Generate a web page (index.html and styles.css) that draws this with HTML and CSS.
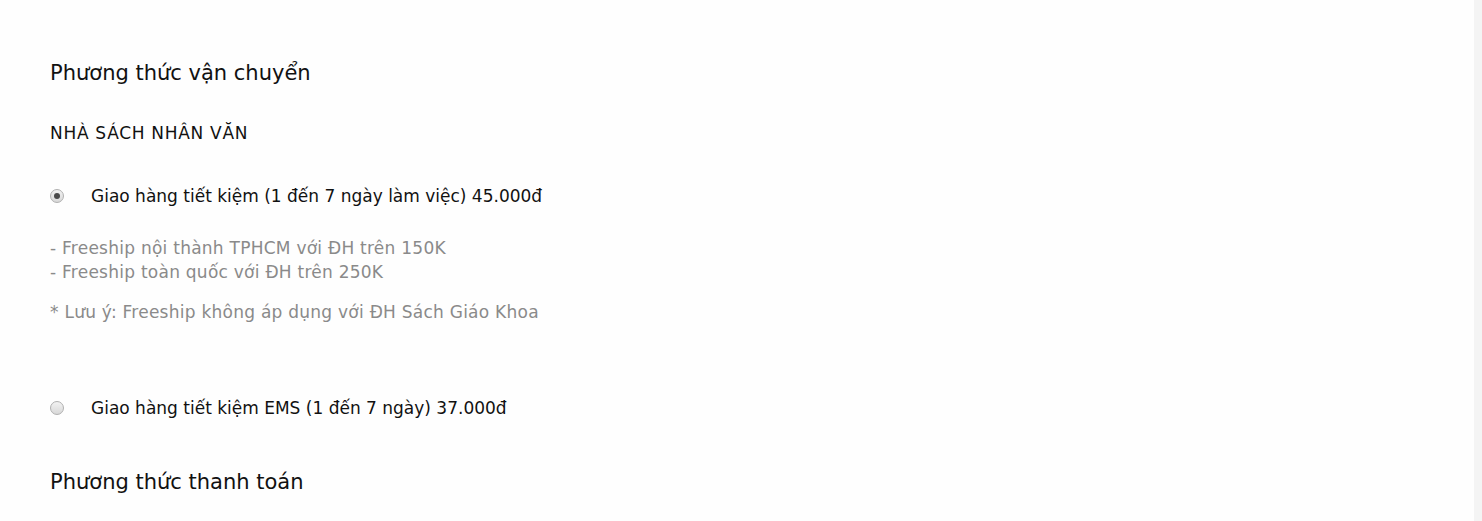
FILE: index.html
```html
<!DOCTYPE html>
<html lang="vi">
<head>
<meta charset="utf-8">
<link rel="stylesheet" href="styles.css">
</head>
<body>
<div class="page">
  <main class="checkout">
    <section class="section shipping">
      <h2 class="section-title">Phương thức vận chuyển</h2>
      <h3 class="store-name">NHÀ SÁCH NHÂN VĂN</h3>
      <label class="option">
        <span class="radio checked"></span>
        <span class="option-label">Giao hàng tiết kiệm (1 đến 7 ngày làm việc) 45.000đ</span>
      </label>
      <div class="option-desc">
        <p class="desc-lines">- Freeship nội thành TPHCM với ĐH trên 150K<br>- Freeship toàn quốc với ĐH trên 250K</p>
        <p class="desc-note">* Lưu ý: Freeship không áp dụng với ĐH Sách Giáo Khoa</p>
      </div>
      <label class="option option-ems">
        <span class="radio"></span>
        <span class="option-label">Giao hàng tiết kiệm EMS (1 đến 7 ngày) 37.000đ</span>
      </label>
    </section>
    <section class="section payment">
      <h2 class="section-title">Phương thức thanh toán</h2>
    </section>
  </main>
  <aside class="side-strip"></aside>
</div>
</body>
</html>
```

FILE: styles.css
```css
html, body {
  margin: 0;
  padding: 0;
  background: #fefefe;
}
body {
  font-family: "DejaVu Sans", "Liberation Sans", sans-serif;
  color: #111;
}
.page {
  display: flex;
  min-height: 521px;
}
.checkout {
  flex: 1;
  padding: 57px 0 0 50px;
}
.side-strip {
  width: 8px;
  background: #f4f4f4;
}
.section-title {
  margin: 0;
  font-size: 21px;
  font-weight: 400;
  line-height: 32px;
  color: #111;
}
.store-name {
  margin: 32px 0 0;
  font-size: 17px;
  font-weight: 400;
  letter-spacing: 0.7px;
  line-height: 24px;
}
.option {
  display: flex;
  align-items: center;
  gap: 27px;
  font-size: 17px;
  line-height: 24px;
}
.shipping .option:first-of-type {
  margin-top: 39px;
}
.radio {
  width: 14px;
  height: 14px;
  flex: none;
  border-radius: 50%;
  box-sizing: border-box;
  border: 1px solid #b0b0b0;
  background: linear-gradient(#f2f2f2, #d8d8d8);
  display: flex;
  align-items: center;
  justify-content: center;
}
.radio.checked::after {
  content: "";
  width: 6px;
  height: 6px;
  border-radius: 50%;
  background: #4a4a4a;
}
.option-desc {
  margin-top: 28px;
  color: #8a8a8a;
  font-size: 17px;
  letter-spacing: 0.25px;
  line-height: 24px;
}
.desc-lines { margin: 0; }
.desc-note { margin: 16px 0 0; }
.option-ems { margin-top: 72px; }
.payment { margin-top: 46px; }
```
